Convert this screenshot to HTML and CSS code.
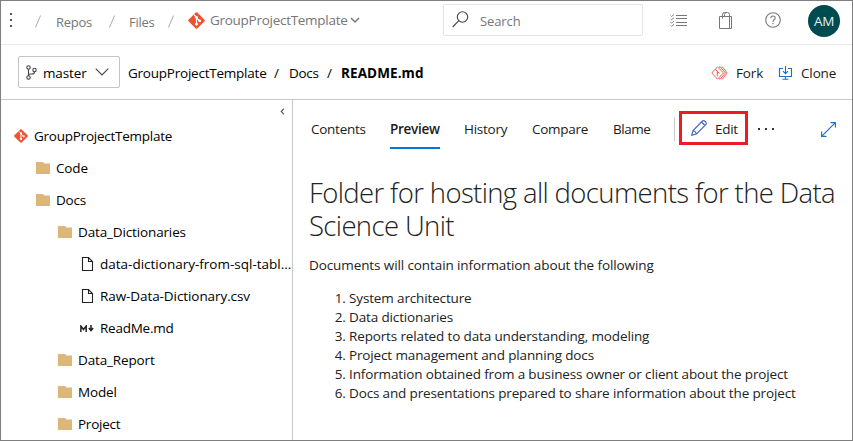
FILE: index.html
```html
<!DOCTYPE html>
<html lang="en">
<head>
<meta charset="utf-8">
<title>README.md - Repos</title>
<link rel="stylesheet" href="styles.css">
</head>
<body>
<svg width="0" height="0" class="defs">
  <symbol id="git" viewBox="0 0 16 16"><path d="M7.2.5Q8 -.2 8.800 .5L15.500 7.200Q16.200 8 15.500 8.800L8.800 15.500Q8 16.200 7.200 15.500L.5 8.800Q-.2 8 .5 7.200Z" fill="#f05133"/><path d="M5.500 2.500L8 5V11.500M8 5.500L11 8.500" stroke="#fff" stroke-width="1.100" fill="none"/><circle cx="8" cy="5" r="1.300" fill="#fff"/><circle cx="8" cy="11.500" r="1.300" fill="#fff"/><circle cx="11" cy="8.300" r="1.300" fill="#fff"/></symbol>
  <symbol id="folder" viewBox="0 0 14 12"><path d="M0 0H7L8.500 1.500H14V12H0Z" fill="#dcb67a"/></symbol>
  <symbol id="file" viewBox="0 0 14 14"><path d="M2.500 .5H8.500L12.500 4.500V13.500H2.500ZM8.500 .5V4.500H12.500" fill="none" stroke="#222" stroke-width="1.100"/></symbol>
</svg>
<div class="window">
  <header class="top">
    <svg class="kebab" width="4" height="16" viewBox="0 0 4 16"><path d="M1 1h2v2H1zM1 7h2v2H1zM1 13h2v2H1z" fill="#555"/></svg>
    <svg class="slash" width="6" height="13" viewBox="0 0 6 13"><path d="M.5 12.500L5.500 .5" stroke="#aaa"/></svg>
    <span class="crumb repos">Repos</span>
    <svg class="slash" width="6" height="13" viewBox="0 0 6 13"><path d="M.5 12.500L5.500 .5" stroke="#aaa"/></svg>
    <span class="crumb files">Files</span>
    <svg class="slash" width="6" height="13" viewBox="0 0 6 13"><path d="M.5 12.500L5.500 .5" stroke="#aaa"/></svg>
    <svg width="17" height="17"><use href="#git"/></svg>
    <span class="crumb project">GroupProjectTemplate</span>
    <svg width="10" height="7" viewBox="0 0 10 7"><path d="M1 1L5 5L9 1" fill="none" stroke="#777" stroke-width="1.500"/></svg>
    <div class="search">
      <svg width="17" height="17" viewBox="0 0 17 17" fill="none" stroke="#444" stroke-width="1.100"><circle cx="10.500" cy="6" r="5.200"/><path d="M6.800 9.700L.7 16"/></svg>
      <span>Search</span>
    </div>
    <svg width="17" height="13" viewBox="0 0 17 13" fill="none" stroke="#777"><path d="M6 1.500H17M6 4.500H17M6 8.500H17M6 11.500H17"/><path d="M.5 1.500l1 1L4 .5M.5 4.700l1 1L4 3.700M.5 8.200l1 1L4 7.200M.5 11.400l1 1L4 10.400" stroke-width=".9"/></svg>
    <svg width="14" height="17" viewBox="0 0 14 17" fill="none" stroke="#777"><path d="M.5 4.500H12.500V16.500H.5ZM10.500 4.500V16.500M3.500 6.500V2.500Q3.500 .5 5.500 .5H8.500Q10.500 .5 10.500 2.500V4.500M5.500 4V2.500Q5.500 1 7 .8"/></svg>
    <svg width="16" height="16" viewBox="0 0 16 16" fill="none" stroke="#777" stroke-width="1.100"><circle cx="8" cy="8" r="7.300"/><path d="M5.800 6.200Q5.800 4 8 4T10.200 6Q10.200 7 9 7.800Q8 8.500 8 9.800M8 11V12.300"/></svg>
    <div class="avatar">AM</div>
  </header>

  <div class="pathbar">
    <div class="branch">
      <svg width="11" height="15" viewBox="0 0 11 15" fill="none" stroke="#444" stroke-width="1.100"><circle cx="2.500" cy="2.500" r="1.700"/><circle cx="2.500" cy="12.500" r="1.700"/><circle cx="8.500" cy="5" r="1.700"/><path d="M2.500 4.200V10.800M8.500 6.700Q8.500 9 6 9H4Q2.500 9 2.500 10.500"/></svg>
      <span class="t-master">master</span>
      <svg width="14" height="8" viewBox="0 0 14 8"><path d="M.7 .7L7 7L13.300 .7" fill="none" stroke="#444" stroke-width="1.100"/></svg>
    </div>
    <span class="p-root">GroupProjectTemplate</span>
    <span class="p-sep">/</span>
    <span class="p-docs">Docs</span>
    <span class="p-sep">/</span>
    <strong class="p-file">README.md</strong>
    <div class="actions">
      <svg width="17" height="14" viewBox="0 0 17 14" fill="none" stroke="#e8533b"><path d="M6.500 .8L12.500 7L6.500 13.200L.8 7ZM8 1.500L9 .7L14.500 7L9 13.300L8 12.500M10.500 1.200L11.300 .8L16.200 7L11.300 13.200L10.500 12.800" stroke-width=".9"/><path d="M4.500 3.500L6.300 5V10M6.300 5.500L8.500 7.500"/></svg>
      <span class="t-fork">Fork</span>
      <svg width="15" height="14" viewBox="0 0 15 14" fill="none" stroke="#1b6ec2" stroke-width="1.100"><path d="M5 2.500H1.500V10.500H13.500V2.500H10M7.500 0V7.500M5 5.200L7.500 7.700L10 5.200M7.500 10.500V13M4.500 13.300H10.500"/></svg>
      <span class="t-clone">Clone</span>
    </div>
  </div>

  <div class="body">
    <aside class="side">
      <svg class="collapse" width="5" height="7" viewBox="0 0 5 7"><path d="M4 .7L1.200 3.500L4 6.300" fill="none" stroke="#555" stroke-width="1.100"/></svg>
      <ul class="tree">
        <li class="row l0"><svg width="14" height="14" viewBox="0 0 14 14"><use href="#git" width="14" height="14"/></svg><span class="snug">GroupProjectTemplate</span></li>
        <li class="row l1"><svg width="14" height="12"><use href="#folder"/></svg><span>Code</span></li>
        <li class="row l1"><svg width="14" height="12"><use href="#folder"/></svg><span class="snug">Docs</span></li>
        <li class="row l2"><svg width="14" height="12"><use href="#folder"/></svg><span>Data_Dictionaries</span></li>
        <li class="row l3"><svg width="14" height="14"><use href="#file"/></svg><span class="loose">data-dictionary-from-sql-tabl...</span></li>
        <li class="row l3"><svg width="14" height="14"><use href="#file"/></svg><span class="raw">Raw-Data-Dictionary.csv</span></li>
        <li class="row l3"><svg width="14" height="7" viewBox="0 0 14 7" fill="none" stroke="#222" stroke-width="1.500"><path d="M.9 7V1L3.500 4.500L6.200 1V7M11 0V5.500M8.800 3L11 5.500L13.200 3"/></svg><span class="snug">ReadMe.md</span></li>
        <li class="row l2"><svg width="14" height="12"><use href="#folder"/></svg><span>Data_Report</span></li>
        <li class="row l2"><svg width="14" height="12"><use href="#folder"/></svg><span>Model</span></li>
        <li class="row l2"><svg width="14" height="12"><use href="#folder"/></svg><span class="snug">Project</span></li>
      </ul>
    </aside>

    <main class="content">
      <nav class="tabs">
        <span class="tab contents">Contents</span>
        <span class="tab active">Preview</span>
        <span class="tab history">History</span>
        <span class="tab compare">Compare</span>
        <span class="tab blame">Blame</span>
        <span class="divider"></span>
        <div class="edit">
          <svg width="16" height="16" viewBox="0 0 16 16" fill="none" stroke="#3a66c4" stroke-width="1.100"><path d="M.7 15.300L2 10.500L11.500 1Q12.800 0 14.300 1.500T15 4.500L5.500 14ZM2 10.500Q4.500 11 5.500 14M10.500 2L14 5.500"/></svg>
          <span>Edit</span>
        </div>
        <svg class="more" width="17" height="2" viewBox="0 0 17 2"><path d="M0 0h2v2H0zM7 0h2v2H7zM14 0h2v2h-2z" fill="#333"/></svg>
        <svg class="expand" width="15" height="15" viewBox="0 0 15 15" fill="none" stroke="#1b6ec2" stroke-width="1.100"><path d="M.8 14.200L14.200 .8M9.500 .6H14.400V5.500M.6 9.500V14.400H5.500"/></svg>
      </nav>
      <article class="doc">
        <h1>Folder for hosting all documents for the Data Science Unit</h1>
        <p>Documents will contain information about the following</p>
        <ol>
          <li>System architecture</li>
          <li>Data dictionaries</li>
          <li>Reports related to data understanding, modeling</li>
          <li>Project management and planning docs</li>
          <li>Information obtained from a business owner or client about the project</li>
          <li>Docs and presentations prepared to share information about the project</li>
        </ol>
      </article>
    </main>
  </div>
</div>
</body>
</html>
```
FILE: styles.css
```css
* { box-sizing: border-box; }
body {
  margin: 0;
  font-family: "Open Sans", "Noto Sans", sans-serif;
  font-size: 13.5px;
  letter-spacing: -0.14px;
  color: #1b1b1b;
  background: #fff;
}
.defs { position: absolute; }
svg { display: block; flex: none; }
.window {
  width: 853px;
  height: 441px;
  border: 1px solid #7f7f7f;
  overflow: hidden;
  display: flex;
  flex-direction: column;
  white-space: nowrap;
}
.top {
  height: 44px;
  flex: none;
  border-bottom: 1px solid #eaeaea;
  display: grid;
  grid-template-columns: 26px 21px 53px 20px 39px 20px 21px 141px 92px 228px 49px 46px 42px 1fr;
  align-items: center;
  padding: 0 0 5px 8px;
  color: #767676;
  letter-spacing: -0.28px;
}
.slash { margin-top: 2px; }
.repos, .files { padding-top: 3px; font-size: 13px; }
.project { margin-left: 1px; }
.search {
  width: 200px;
  height: 32px;
  border: 1px solid #e4e4e4;
  border-radius: 2px;
  display: flex;
  align-items: center;
  gap: 11px;
  padding: 0 0 0 8px;
  margin: 0 0 0 1px;
}
.search svg { margin-top: -1px; }
.search span { font-size: 13px; letter-spacing: -0.1px; padding-top: 2px; }
.avatar {
  width: 32px;
  height: 32px;
  margin: 2px 0 0 1px;
  border-radius: 50%;
  background: #004b50;
  color: #e8f0f0;
  display: flex;
  align-items: center;
  justify-content: center;
}
.pathbar {
  height: 55px;
  flex: none;
  border-bottom: 1px solid #c8c8c8;
  display: flex;
  align-items: center;
  padding: 2px 15px 0 17px;
  color: #000;
}
.branch {
  width: 102px;
  height: 32px;
  margin-top: -2px;
  border: 1px solid #c4c4c4;
  border-radius: 2px;
  display: flex;
  align-items: center;
  padding-left: 7px;
}
.t-master { width: 45px; margin: 1px 7px 0 6px; }
.p-root { width: 146px; margin-left: 8px; letter-spacing: -0.23px; }
.p-sep { width: 15px; }
.p-docs { width: 38px; letter-spacing: -0.3px; }
.p-file { letter-spacing: 0.1px; margin-left: -1px; }
.actions { margin-left: auto; display: flex; align-items: center; color: #1b1b1b; }
.t-fork { width: 26px; margin: 0 16px 0 8px; }
.t-clone { width: 36px; margin-left: 8px; }
.body { flex: 1; display: flex; min-height: 0; }
.side { width: 292px; border-right: 1px solid #c8c8c8; flex: none; }
.collapse { margin: 8px 0 0 279px; }
.tree { list-style: none; margin: 5px 0 0; padding: 0; color: #000; }
.row { height: 32px; display: flex; align-items: center; gap: 6px; }
.l0 { padding-left: 13px; }
.l1 { padding-left: 35px; }
.l2 { padding-left: 57px; }
.l3 { padding-left: 79px; }
.snug { letter-spacing: -0.25px; }
.loose { letter-spacing: 0; }
.raw { letter-spacing: -0.08px; }
.content { flex: 1; min-width: 0; }
.tabs { display: flex; height: 58px; align-items: center; padding-left: 18px; letter-spacing: -0.27px; }
.tab { flex: none; line-height: 20px; }
.contents { width: 79px; }
.active { font-weight: 600; height: 39px; width: 50px; margin-right: 24px; padding-top: 9px; border-bottom: 2px solid #0078d4; }
.history { width: 68px; }
.compare { width: 81px; }
.blame { width: 61px; letter-spacing: -0.45px; }
.divider { width: 1px; height: 24px; background: #c8c8c8; }
.edit {
  width: 69px;
  height: 34px;
  border: 3px solid #ed1c24;
  margin: -2px 0 0 4px;
  display: flex;
  align-items: center;
  gap: 8px;
  padding-left: 9px;
  flex: none;
}
.edit span { padding-top: 1px; }
.more { margin-left: 10px; }
.expand { margin-left: 46px; }
.doc { padding: 18px 0 0 16px; color: #222; }
.doc h1 {
  width: 536px;
  margin: 0;
  font-weight: 300;
  font-size: 27.5px;
  line-height: 33px;
  letter-spacing: -0.63px;
  white-space: normal;
}
.doc p { margin: 14px 0 0; line-height: 19px; letter-spacing: -0.1px; }
.doc ol { margin: 14px 0 0; padding-left: 40px; line-height: 19px; }
```
